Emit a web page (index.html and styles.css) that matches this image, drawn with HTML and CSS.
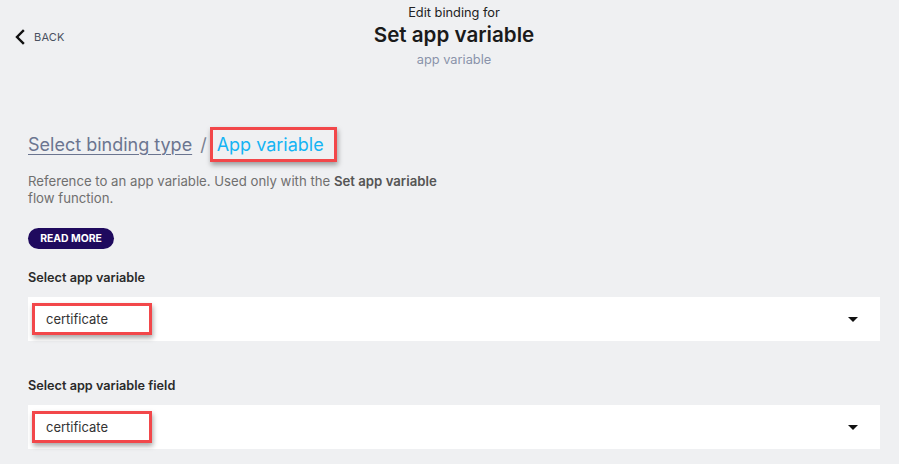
FILE: index.html
```html
<!DOCTYPE html>
<html>
<head>
<meta charset="utf-8">
<link rel="stylesheet" href="styles.css">
</head>
<body>
<header class="top">
  <a class="back" href="#">
    <svg class="chev" width="12" height="16" viewBox="0 0 12 16"><path d="M9 2 L3 8 L9 14" fill="none" stroke="#111" stroke-width="2.4" stroke-linecap="square"/></svg>
    <span>BACK</span>
  </a>
  <div class="titles">
    <div class="pre">Edit binding for</div>
    <h1 class="title">Set app variable</h1>
    <div class="sub">app variable</div>
  </div>
</header>
<main class="content">
  <div class="crumbs">
    <a class="crumb-link" href="#">Select binding type</a>
    <span class="sep">/</span>
    <span class="hl crumb-current">App variable</span>
  </div>
  <p class="desc">Reference to an app variable. Used only with the <b>Set app variable</b><br>flow function.</p>
  <button class="read-more">READ MORE</button>
  <label class="label">Select app variable</label>
  <div class="select"><span class="hl sel-val">certificate</span><span class="caret"></span></div>
  <label class="label label2">Select app variable field</label>
  <div class="select"><span class="hl sel-val">certificate</span><span class="caret"></span></div>
</main>
</body>
</html>
```
FILE: styles.css
```css
* { box-sizing: border-box; }
html, body { margin: 0; padding: 0; }
body {
  background: #eff0f2;
  font-family: "Inter", "Open Sans", sans-serif;
  color: #222;
  width: 899px;
  height: 464px;
  overflow: hidden;
}
.top {
  display: flex;
  justify-content: center;
  padding-top: 4px;
  padding-left: 9px;
  height: 80px;
}
.back {
  position: absolute;
  left: 14px;
  top: 29px;
  display: flex;
  align-items: center;
  gap: 8px;
  text-decoration: none;
  color: #4a5060;
  font-size: 11px;
  letter-spacing: 0.2px;
}
.titles { text-align: center; }
.pre { font-size: 12.8px; line-height: 17px; color: #222; }
.title { font-size: 20.6px; font-weight: 600; margin: 1px 0 0; line-height: 26px; color: #1a1a1a; }
.sub { font-size: 12.8px; line-height: 17px; margin-top: 3px; color: #8a93aa; }
.content { padding: 46px 19px 0 28px; }
.crumbs { display: flex; align-items: center; font-size: 18px; height: 36px; }
.crumb-link { color: #6b7590; text-decoration: underline; text-underline-offset: 3px; text-decoration-thickness: 1px; }
.sep { color: #7a8090; margin: 0 3px 0 8px; }
.hl {
  border: 3px solid #f2474a;
  box-shadow: 1px 3px 5px rgba(0,0,0,0.35);
}
.crumb-current { color: #14b4f4; padding: 4px 10px 4px 4px; }
.desc { font-size: 13.2px; line-height: 17px; color: #6f6f6f; margin: 11px 0 0; }
.desc b { color: #555; font-weight: 600; }
.read-more {
  display: block;
  margin-top: 21px;
  background: #1f0a5e;
  color: #fff;
  border: none;
  border-radius: 11px;
  font-family: inherit;
  font-weight: 700;
  font-size: 10.4px;
  height: 21px;
  width: 86px;
  padding: 0;
}
.label { display: block; font-size: 12.7px; font-weight: 600; color: #2a2a2a; margin-top: 21px; line-height: 16px; }
.label2 { margin-top: 37px; }
.select {
  margin-top: 11px;
  background: #fff;
  height: 44px;
  display: flex;
  align-items: center;
  padding-left: 4px;
  padding-right: 22px;
  justify-content: space-between;
}
.sel-val { font-size: 13px; color: #333; padding: 6px 20px 6px 11px; width: 120px; height: 32px; display: flex; align-items: center; }
.caret { width: 0; height: 0; border-left: 5px solid transparent; border-right: 5px solid transparent; border-top: 5px solid #111; }
```
